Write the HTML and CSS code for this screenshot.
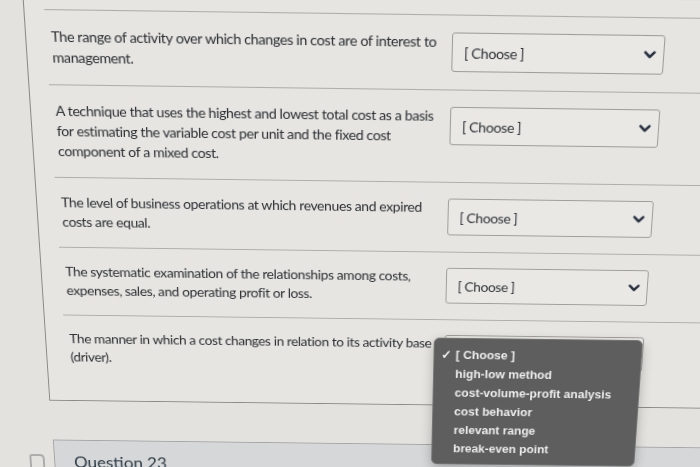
FILE: index.html
```html
<!DOCTYPE html>
<html lang="en">
  <head>
    <meta charset="UTF-8" />
    <meta name="viewport" content="width=device-width, initial-scale=1.0" />
    <title>Quiz - Matching</title>
    <link rel="stylesheet" href="styles.css">
  </head>
  <body>
    <div class="stage">
      <!-- Matching question: prompts on the left, dropdowns on the right -->
      <div class="quiz-card">
        <div class="match-row">
          <p class="prompt">The range of activity over which changes in cost are of interest to management.</p>
          <div class="select">
            <span>[ Choose ]</span>
            <svg class="chevron" viewBox="0 0 12 8"><path d="M1.6 1.6 L6 6 L10.4 1.6" /></svg>
          </div>
        </div>
        <div class="match-row">
          <p class="prompt">A technique that uses the highest and lowest total cost as a basis for estimating the variable cost per unit and the fixed cost component of a mixed cost.</p>
          <div class="select">
            <span>[ Choose ]</span>
            <svg class="chevron" viewBox="0 0 12 8"><path d="M1.6 1.6 L6 6 L10.4 1.6" /></svg>
          </div>
        </div>
        <div class="match-row">
          <p class="prompt">The level of business operations at which revenues and expired costs are equal.</p>
          <div class="select">
            <span>[ Choose ]</span>
            <svg class="chevron" viewBox="0 0 12 8"><path d="M1.6 1.6 L6 6 L10.4 1.6" /></svg>
          </div>
        </div>
        <div class="match-row">
          <p class="prompt">The systematic examination of the relationships among costs, expenses, sales, and operating profit or loss.</p>
          <div class="select">
            <span>[ Choose ]</span>
            <svg class="chevron" viewBox="0 0 12 8"><path d="M1.6 1.6 L6 6 L10.4 1.6" /></svg>
          </div>
        </div>
        <div class="match-row last">
          <p class="prompt">The manner in which a cost changes in relation to its activity base (driver).</p>
          <div class="select-wrap">
            <div class="select">
              <span>[ Choose ]</span>
              <svg class="chevron" viewBox="0 0 12 8"><path d="M1.6 1.6 L6 6 L10.4 1.6" /></svg>
            </div>
            <!-- open native popup -->
            <ul class="popup-menu">
              <li class="checked">[ Choose ]</li>
              <li>high-low method</li>
              <li>cost-volume-profit analysis</li>
              <li>cost behavior</li>
              <li>relevant range</li>
              <li>break-even point</li>
            </ul>
          </div>
        </div>
      </div>

      <!-- Next question -->
      <div class="q-next">
        <svg class="bookmark" viewBox="0 0 18 22"><path d="M2 21 V4 Q2 2 4 2 H12 Q16 2 16 6 V21" /></svg>
        <div class="q-header">
          <h3>Question 23</h3>
        </div>
      </div>
    </div>
  </body>
</html>
```

FILE: styles.css
```css
* {
  box-sizing: border-box;
}

body {
  margin: 0;
  overflow: hidden;
  background: #e4e2de;
  font-family: Lato, "Noto Sans", sans-serif;
  color: #2c2f34;
}

/* whole page is viewed at a slight angle */
.stage {
  width: 760px;
  transform-origin: 335px 200px;
  transform: perspective(1000px) rotateX(-12.5deg) skewY(0.75deg);
}

.quiz-card {
  margin-left: 36px;
  padding-top: 16px;
  border-left: 1px solid #8a8986;
  border-bottom: 1px solid #8a8986;
  background: #e6e5e1;
}

.match-row {
  margin-left: 19px;
  padding: 15px 0 16px 5px;
  border-top: 1px solid #aeada9;
  display: grid;
  grid-template-columns: 379px 206px;
  column-gap: 8px;
  align-items: start;
}

.match-row.last {
  padding-bottom: 38px;
}

.prompt {
  margin: 0;
  font-size: 14px;
  line-height: 20px;
  letter-spacing: -0.4px;
}

.select {
  height: 38px;
  margin-top: 1px;
  padding: 0 7px 0 11px;
  border: 1px solid #9e9d9a;
  border-radius: 3px;
  background: #e9e8e4;
  display: flex;
  align-items: center;
  justify-content: space-between;
  font-size: 14px;
  letter-spacing: -0.4px;
  color: #2f3338;
}

.chevron {
  width: 12px;
  height: 8px;
}

.chevron path {
  fill: none;
  stroke: #2b3346;
  stroke-width: 2.6;
  stroke-linecap: round;
  stroke-linejoin: round;
}

.select-wrap {
  position: relative;
}

.popup-menu {
  position: absolute;
  top: 4px;
  left: -11px;
  width: 216px;
  margin: 0;
  padding: 7.5px 0 5.5px;
  list-style: none;
  background: #5e5e5e;
  border: 1px solid #777;
  border-radius: 6px;
  box-shadow: 0 4px 12px rgba(0, 0, 0, 0.25);
  font-family: "Liberation Sans", Arial, sans-serif;
  font-weight: bold;
  font-size: 12.6px;
  line-height: 21.1px;
  color: #ececec;
  z-index: 2;
}

.popup-menu li {
  position: relative;
  padding-left: 22px;
}

.popup-menu li.checked::before {
  content: "\2713";
  position: absolute;
  left: 7px;
}

.q-next {
  margin-top: 44px;
  margin-left: 10px;
  display: flex;
  align-items: flex-start;
}

.bookmark {
  width: 18px;
  height: 22px;
  margin-top: 16px;
  margin-right: 9px;
}

.bookmark path {
  fill: none;
  stroke: #a9a9a7;
  stroke-width: 2;
}

.q-header {
  flex: 1;
  padding: 12px 20px;
  background: #d5d7d8;
  border-top: 1px solid #a4a5a5;
  border-left: 1px solid #a4a5a5;
}

.q-header h3 {
  margin: 0;
  font-size: 18px;
  font-weight: 400;
  line-height: 24px;
  color: #2d3b45;
}
```
